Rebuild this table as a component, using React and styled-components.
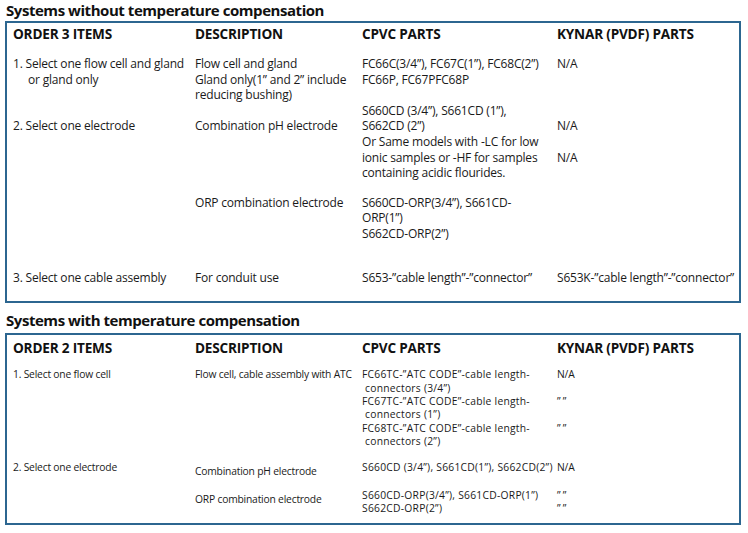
import React from "react";
import styled, { createGlobalStyle } from "styled-components";

const Global = createGlobalStyle`
  html, body { margin: 0; padding: 0; background: #ffffff; }
  body { font-family: "Open Sans", "Noto Sans", sans-serif; color: #1a1a1a; }
`;

const Page = styled.div`
  width: 748px;
  height: 533px;
  display: flex;
  flex-direction: column;
  padding: 0 7px 0 5px;
  box-sizing: border-box;
`;

const Title = styled.h2`
  margin: ${(p) => p.$top}px 0 ${(p) => p.$bottom}px 1px;
  font-size: 15px;
  line-height: 20px;
  font-weight: 700;
  letter-spacing: -0.45px;
  color: #111;
`;

const Table = styled.section`
  border: 2px solid #2c6690;
  padding: ${(p) => p.$pt}px 0 ${(p) => p.$pb}px 6px;
  display: flex;
  flex-direction: column;
`;

const Row = styled.div`
  display: grid;
  grid-template-columns: 182px 167px 195px 1fr;
  margin-top: ${(p) => p.$mt || 0}px;
  font-size: ${(p) => (p.$small ? 10.3 : 12)}px;
  line-height: ${(p) => (p.$small ? 13.4 : 15.6)}px;
  letter-spacing: ${(p) => (p.$small ? -0.2 : -0.2)}px;
`;

const HeadRow = styled(Row)`
  font-size: 13.6px;
  line-height: 16px;
  font-weight: 700;
  letter-spacing: -0.2px;
  color: #111;
`;

const Cell = styled.div`
  padding-top: ${(p) => p.$shift || 0}px;
  white-space: nowrap;
  letter-spacing: ${(p) => (p.$wide ? "0.25px" : "inherit")};
`;

const Line = styled.div`
  min-height: 1em;
  padding-left: ${(p) => p.$indent || 0}px;
`;

const cells = (cols) =>
  cols.map((c, i) => (
    <Cell key={i} $shift={c.shift} $wide={c.wide}>
      {(c.lines || []).map((l, j) =>
        typeof l === "string" ? (
          <Line key={j}>{l || "\u00a0"}</Line>
        ) : (
          <Line key={j} $indent={l.indent}>
            {l.text}
          </Line>
        )
      )}
    </Cell>
  ));

export default function App() {
  return (
    <>
      <Global />
      <Page>
        <Title $top={0} $bottom={1}>Systems without temperature compensation</Title>
        <Table $pt={3} $pb={16}>
          <HeadRow>
            <Cell>ORDER 3 ITEMS</Cell>
            <Cell>DESCRIPTION</Cell>
            <Cell>CPVC PARTS</Cell>
            <Cell>KYNAR (PVDF) PARTS</Cell>
          </HeadRow>
          <Row $mt={14}>
            {cells([
              { lines: ["1. Select one flow cell and gland", { text: "or gland only", indent: 15 }] },
              { lines: ["Flow cell and gland", "Gland only(1\u201d and 2\u201d include", "reducing bushing)"] },
              { lines: ["FC66C(3/4\u201d), FC67C(1\u201d), FC68C(2\u201d)", "FC66P, FC67PFC68P"] },
              { lines: ["N/A"] },
            ])}
          </Row>
          <Row>
            {cells([
              { lines: ["", "2. Select one electrode"] },
              { lines: ["", "Combination pH electrode"] },
              {
                lines: [
                  "S660CD (3/4\u201d), S661CD (1\u201d),",
                  "S662CD (2\u201d)",
                  "Or Same models with -LC for low",
                  "ionic samples or -HF for  samples",
                  "containing acidic flourides.",
                ],
              },
              { lines: ["", "N/A", "", "N/A"] },
            ])}
          </Row>
          <Row $mt={14}>
            {cells([
              { lines: [] },
              { lines: ["ORP combination electrode"] },
              { lines: ["S660CD-ORP(3/4\u201d), S661CD-", "ORP(1\u201d)", "S662CD-ORP(2\u201d)"] },
              { lines: [] },
            ])}
          </Row>
          <Row $mt={28}>
            {cells([
              { lines: ["3. Select one cable assembly"] },
              { lines: ["For conduit use"] },
              { lines: ["S653-\u201dcable length\u201d-\u201dconnector\u201d"] },
              { lines: ["S653K-\u201dcable length\u201d-\u201dconnector\u201d"] },
            ])}
          </Row>
        </Table>

        <Title $top={7} $bottom={3}>Systems with temperature compensation</Title>
        <Table $pt={5} $pb={7}>
          <HeadRow>
            <Cell>ORDER 2 ITEMS</Cell>
            <Cell>DESCRIPTION</Cell>
            <Cell>CPVC PARTS</Cell>
            <Cell>KYNAR (PVDF) PARTS</Cell>
          </HeadRow>
          <Row $small $mt={12}>
            {cells([
              { lines: ["1. Select one flow cell"] },
              { lines: ["Flow cell, cable assembly with ATC"] },
              {
                wide: true,
                lines: [
                  "FC66TC-\u201dATC CODE\u201d-cable length-",
                  { text: "connectors (3/4\u201d)", indent: 3 },
                  "FC67TC-\u201dATC CODE\u201d-cable length-",
                  { text: "connectors (1\u201d)", indent: 3 },
                  "FC68TC-\u201dATC CODE\u201d-cable length-",
                  { text: "connectors (2\u201d)", indent: 3 },
                ],
              },
              { lines: ["N/A", "", "\u201d \u201d", "", "\u201d \u201d"] },
            ])}
          </Row>
          <Row $small $mt={12}>
            {cells([
              { lines: ["2. Select one electrode"] },
              { lines: ["Combination pH electrode"], shift: 4 },
              { wide: true, lines: ["S660CD (3/4\u201d), S661CD(1\u201d), S662CD(2\u201d)"] },
              { lines: ["N/A"] },
            ])}
          </Row>
          <Row $small $mt={11}>
            {cells([
              { lines: [] },
              { lines: ["ORP combination electrode"], shift: 4 },
              { wide: true, lines: ["S660CD-ORP(3/4\u201d), S661CD-ORP(1\u201d)", "S662CD-ORP(2\u201d)"] },
              { lines: ["\u201d \u201d", "\u201d \u201d"] },
            ])}
          </Row>
        </Table>
      </Page>
    </>
  );
}
